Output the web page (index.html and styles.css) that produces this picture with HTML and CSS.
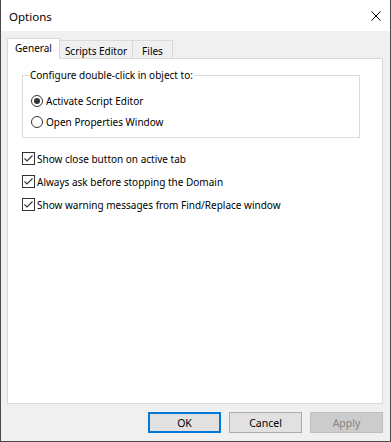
FILE: index.html
```html
<!DOCTYPE html>
<html lang="en">
<head>
    <meta charset="UTF-8">
    <title>Options</title>
    <link rel="stylesheet" href="styles.css">
</head>
<body>
<div class="window">
    <div class="titlebar">
        <span class="title">Options</span>
        <span class="close-btn">
            <svg width="10" height="10" viewBox="0 0 10 10">
                <path d="M0.5 0.5 L9.5 9.5 M9.5 0.5 L0.5 9.5" stroke="#000" stroke-width="1"/>
            </svg>
        </span>
    </div>

    <div class="content">
        <div class="tabs">
            <div class="tab active">General</div>
            <div class="tab scripts">Scripts Editor</div>
            <div class="tab files">Files</div>
        </div>

        <div class="panel">
            <fieldset class="group">
                <legend>Configure double-click in object to:</legend>
                <div class="option">
                    <span class="radio checked"></span>
                    <span>Activate Script Editor</span>
                </div>
                <div class="option">
                    <span class="radio"></span>
                    <span>Open Properties Window</span>
                </div>
            </fieldset>

            <div class="checks">
                <div class="option check-row">
                    <span class="checkbox">
                        <svg width="11" height="11" viewBox="0 0 11 11">
                            <path d="M1.5 5.5 L4 8 L9.5 2.5" fill="none" stroke="#333" stroke-width="1.1"/>
                        </svg>
                    </span>
                    <span>Show close button on active tab</span>
                </div>
                <div class="option check-row">
                    <span class="checkbox">
                        <svg width="11" height="11" viewBox="0 0 11 11">
                            <path d="M1.5 5.5 L4 8 L9.5 2.5" fill="none" stroke="#333" stroke-width="1.1"/>
                        </svg>
                    </span>
                    <span>Always ask before stopping the Domain</span>
                </div>
                <div class="option check-row">
                    <span class="checkbox">
                        <svg width="11" height="11" viewBox="0 0 11 11">
                            <path d="M1.5 5.5 L4 8 L9.5 2.5" fill="none" stroke="#333" stroke-width="1.1"/>
                        </svg>
                    </span>
                    <span>Show warning messages from Find/Replace window</span>
                </div>
            </div>
        </div>

        <div class="buttons">
            <button class="default">OK</button>
            <button>Cancel</button>
            <button disabled>Apply</button>
        </div>
    </div>
</div>
</body>
</html>
```

FILE: styles.css
```css
/* Dialog window */
body {
    margin: 0;
    font-family: "Noto Sans", "Open Sans", sans-serif;
    font-size: 10px;
    color: #000;
    background-color: #fff;
}

.window {
    width: 391px;
    height: 442px;
    box-sizing: border-box;
    border: 1px solid #4a4a4a;
    border-top: none;
    display: flex;
    flex-direction: column;
    background-color: #f0f0f0;
}

.titlebar {
    height: 31px;
    background-color: #fff;
    display: flex;
    align-items: center;
    justify-content: space-between;
    padding: 0 9px 0 8px;
    flex-shrink: 0;
}

.title {
    font-size: 11.5px;
    margin-top: 1px;
}

.close-btn {
    display: flex;
}

.content {
    flex: 1;
    display: flex;
    flex-direction: column;
    padding: 7px 7px 8px 6px;
}

/* Tabs */
.tabs {
    display: flex;
    align-items: flex-end;
    height: 21px;
    position: relative;
    z-index: 1;
    margin-bottom: -1px;
}

.tab {
    height: 18px;
    line-height: 20px;
    text-align: center;
    border: 1px solid #d9d9d9;
    border-bottom: none;
    box-sizing: border-box;
    background-color: #f0f0f0;
    margin-left: -1px;
    margin-bottom: 1px;
}

.tab.active {
    width: 53px;
    height: 21px;
    line-height: 19px;
    background-color: #fff;
    margin-left: 0;
    margin-bottom: 0;
    position: relative;
    z-index: 2;
}

.tab.scripts {
    width: 74px;
}

.tab.files {
    width: 41px;
}

.panel {
    flex: 1;
    background-color: #fff;
    border: 1px solid #d9d9d9;
    padding: 9px 22px 0 14px;
}

/* Group box */
.group {
    margin: 0;
    border: 1px solid #dcdcdc;
    padding: 7px 8px 5px 8px;
}

.group legend {
    padding: 0 1px;
    margin-left: -2px;
    line-height: 15px;
}

.option {
    display: flex;
    align-items: center;
    height: 21px;
    gap: 3px;
}

.radio {
    width: 12px;
    height: 12px;
    box-sizing: border-box;
    border: 1px solid #333;
    border-radius: 50%;
    display: flex;
    align-items: center;
    justify-content: center;
    background-color: #fff;
}

.radio.checked::after {
    content: "";
    width: 6px;
    height: 6px;
    border-radius: 50%;
    background-color: #333;
}

.checks {
    margin-top: 9px;
    display: flex;
    flex-direction: column;
}

.check-row {
    height: 23px;
    gap: 2px;
}

.checkbox {
    width: 13px;
    height: 13px;
    box-sizing: border-box;
    border: 1px solid #333;
    background-color: #fff;
    display: flex;
}

/* Buttons */
.buttons {
    display: flex;
    justify-content: flex-end;
    gap: 8px;
    margin-top: 8px;
}

button {
    width: 73px;
    height: 21px;
    font-family: inherit;
    font-size: 10.5px;
    background-color: #e1e1e1;
    border: 1px solid #adadad;
    color: #000;
    padding: 0;
}

button.default {
    border: 2px solid #0078d7;
}

button:disabled {
    background-color: #cccccc;
    border-color: #bfbfbf;
    color: #838383;
}
```
